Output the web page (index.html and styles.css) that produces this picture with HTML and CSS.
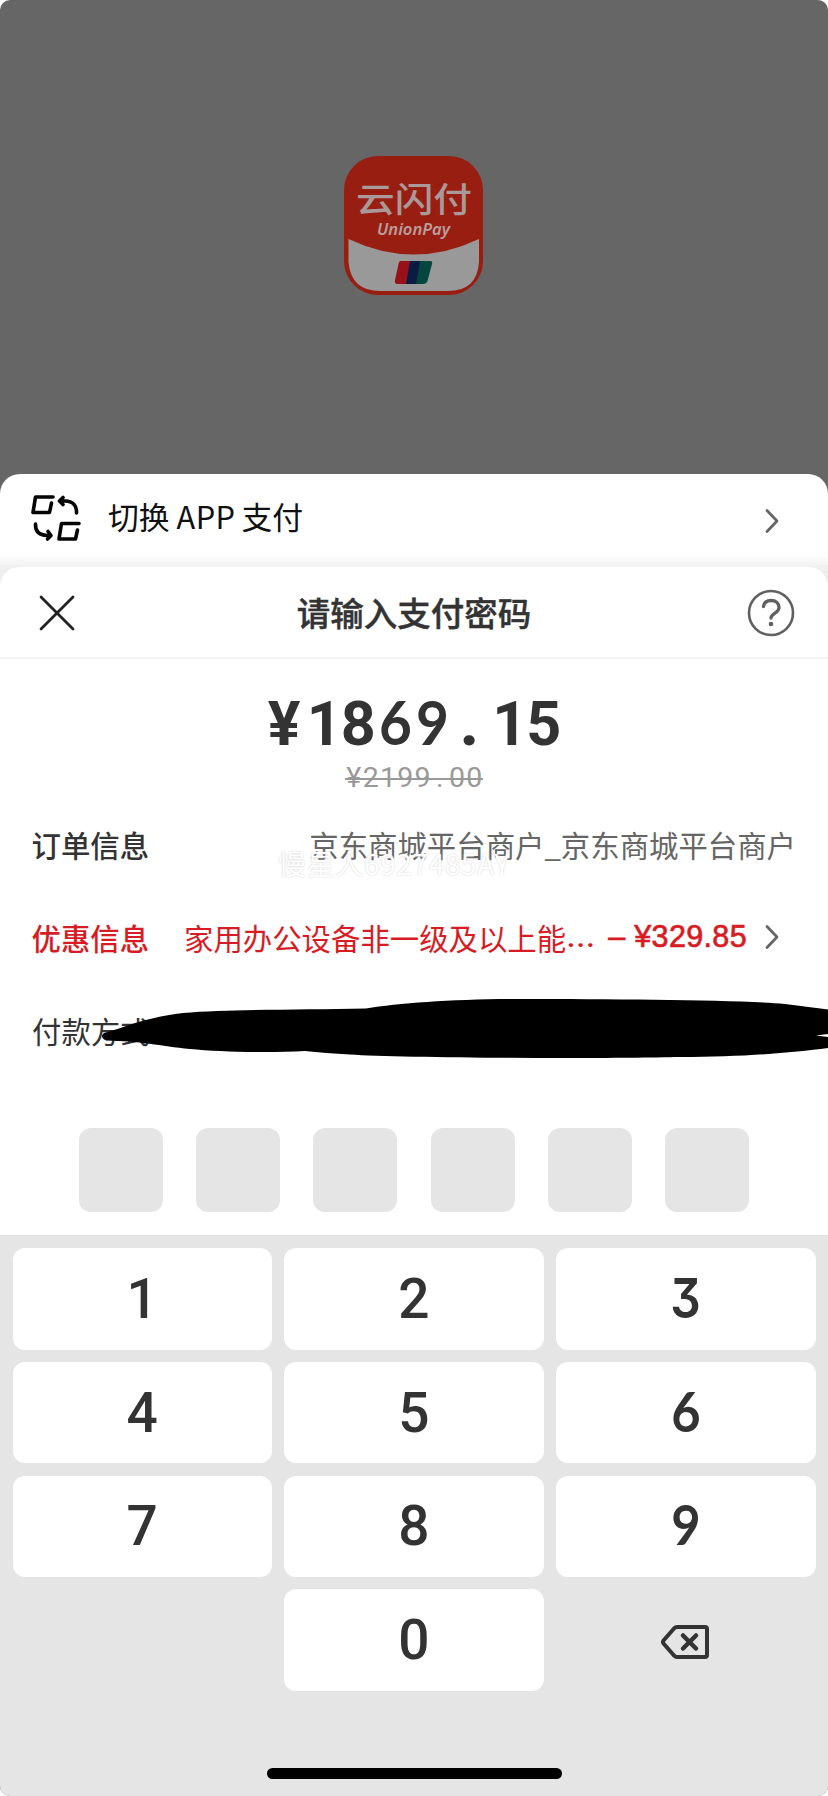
FILE: index.html
```html
<!DOCTYPE html>
<html lang="zh-CN">
<head>
<meta charset="utf-8">
<title>支付</title>
<link rel="stylesheet" href="styles.css">
</head>
<body>
<div class="screen">
  <header class="backdrop">
    <svg class="logo" viewBox="0 0 140 140">
      <rect width="139" height="139" rx="34" fill="#991e12"/>
      <path d="M4.500 83Q70 114 135 83V106Q133 135 104 135H36Q7 135 4.500 106Z" fill="#999"/>
      <path d="M57 105H69L63 128H54Q50 128 51 124L54.500 108Q55 105 57 105Z" fill="#981018"/>
      <path d="M66 105H77L73 128H62Z" fill="#0a1c44"/>
      <path d="M76 105H86Q89 105 88 108L83.500 125Q82.500 128 79 128H72Z" fill="#05463e"/>
      <text class="logo-cn" x="12" y="55.500" textLength="116" lengthAdjust="spacingAndGlyphs">云闪付</text>
      <text class="logo-en" x="33" y="79" textLength="73" lengthAdjust="spacingAndGlyphs">UnionPay</text>
    </svg>
  </header>
  <section class="switch">
    <svg class="switch-icon" viewBox="0 0 50 48" fill="none" stroke="#050505" stroke-width="3.600" stroke-linecap="round" stroke-linejoin="round">
      <path d="M22 3H4.500L2 18.500H18.500L20.500 9"/>
      <path d="M48 29.500H30.500L28 45H44.500L46.500 36"/>
      <path d="M45.500 19Q46 7.500 34 7H30M32 3.500L28.500 7L32 10.500"/>
      <path d="M4.500 30Q4 41 16 41.500H20M17 37.500L20 41.500L16.500 45"/>
    </svg>
    <span class="switch-text">切换<span class="app">APP</span>支付</span>
    <svg class="chevron" viewBox="0 0 16 26"><path d="M3 2.500L13 13L3 23.500"/></svg>
  </section>
  <main class="sheet">
    <div class="titlebar">
      <svg class="close" viewBox="0 0 36 36"><path d="M2 2L34 34M34 2L2 34"/></svg>
      <h1>请输入支付密码</h1>
      <svg class="help" viewBox="0 0 48 48" fill="none" stroke="#606060">
        <circle cx="24" cy="24" r="22" stroke-width="2.600"/>
        <path d="M16.500 17.500C17 13 20 11.500 24 11.500C29 11.500 32 14.500 32 18.500C32 24 24 24.500 24 29" stroke-width="3.300" stroke-linecap="round"/>
        <circle cx="24" cy="35" r="2.300" fill="#606060" stroke="none"/>
      </svg>
    </div>
    <div class="price"><i>¥</i><i class="one">1</i><i>8</i><i class="lato">6</i><i class="lato">9</i><i class="dot">.</i><i class="one">1</i><i>5</i></div>
    <div class="old"><i>¥</i><i>2</i><i>1</i><i>9</i><i>9</i><i>.</i><i>0</i><i>0</i></div>
    <div class="rows">
      <div class="row"><b>订单信息</b><span class="merchant">京东商城平台商户_京东商城平台商户</span>
        <span class="watermark">慢星人6927485AY</span></div>
      <div class="row red"><b>优惠信息</b><span class="promo">家用办公设备非一级及以上能<span class="ellipsis">…</span></span><span class="off">– ¥329.85</span>
        <svg class="chevron" viewBox="0 0 16 26"><path d="M3 2.500L13 13L3 23.500"/></svg></div>
      <div class="row"><span class="pay">付款方式</span>
        <svg class="scribble" viewBox="100 995 728 66"><path d="M104 1033C118 1030 145 1017 183 1013C230 1009 300 1010 366 1008.500C400 1003 455 999 520 999C620 999 740 1000 785 1004Q810 1007 828 1009.500V1034L816 1035.500L828 1037V1048C790 1053 740 1057 680 1057C600 1059 400 1058 350 1054.500Q325 1053 305 1051C270 1053 220 1052 190 1049C160 1046 140 1041 106 1040.500Q99 1037 104 1033Z"/></svg></div>
    </div>
    <div class="pin"><span></span><span></span><span></span><span></span><span></span><span></span></div>
  </main>
  <div class="keypad">
    <div class="keys">
      <button>1</button><button>2</button><button><span class="flat">3</span></button>
      <button>4</button><button>5</button><button><span class="lato">6</span></button>
      <button>7</button><button>8</button><button><span class="lato">9</span></button>
      <span></span><button>0</button>
      <div class="delete"><svg viewBox="0 0 48 34" fill="none" stroke="#333" stroke-linecap="round" stroke-linejoin="round"><path d="M16 2H44Q46 2 46 4V30Q46 32 44 32H16Q14.500 32 13 30.500L2.500 18.500Q1.500 17 2.500 15.500L13 3.500Q14.500 2 16 2Z" stroke-width="4"/><path d="M22 10.500L35 23.500M35 10.500L22 23.500" stroke-width="4.500"/></svg></div>
    </div>
    <div class="home"></div>
  </div>
</div>
</body>
</html>
```
FILE: styles.css
```css
* { box-sizing: border-box; }
body { margin: 0; background: #fff; font-family: "Noto Sans CJK SC", sans-serif; color: #333; }
i { font-style: normal; }
svg { display: block; flex: none; }
.screen { width: 828px; height: 1796px; background: #666; border-radius: 10px; overflow: hidden; display: flex; flex-direction: column; }
.backdrop { height: 474px; flex: none; padding-top: 156px; }
.logo { width: 140px; height: 140px; margin: 0 auto; }
.logo-cn { font-size: 34px; font-weight: 500; fill: #a99a99; }
.logo-en { font: italic 600 16.500px "Noto Sans", sans-serif; fill: #b99f9c; }
.switch { height: 113px; flex: none; margin-bottom: -20px; padding: 0 48px 25px 31px; display: flex; align-items: center; background: linear-gradient(#fff 80px, #eee 96px, #eee); border-radius: 20px 20px 0 0; }
.switch-icon { width: 50px; height: 48px; }
.switch-text { flex: 1; margin: -4px 0 0 27px; font-size: 30.800px; line-height: 44px; color: #111; white-space: nowrap; }
.app { margin: 0 6px 0 7px; letter-spacing: .4px; }
.chevron { width: 16px; height: 26px; fill: none; stroke: #666; stroke-width: 2.800; stroke-linecap: round; stroke-linejoin: round; }
.switch .chevron { margin-top: 6px; }
.sheet { height: 668px; flex: none; background: #fff; border-radius: 20px 20px 0 0; position: relative; }
.titlebar { height: 92px; border-bottom: 2px solid #f3f3f3; display: flex; align-items: center; justify-content: space-between; padding: 2px 33px 0 39px; }
.close { width: 36px; height: 36px; fill: none; stroke: #222; stroke-width: 2.800; stroke-linecap: round; }
h1 { margin: -2px 0 0 6px; font-size: 33.500px; line-height: 48px; font-weight: 500; -webkit-text-stroke: .4px #333; }
.help { width: 48px; height: 48px; }
.price { height: 70px; margin-top: 30px; display: flex; justify-content: center; font: 700 61px/70px Roboto, sans-serif; }
.price i { width: 37.100px; text-align: center; }
.lato { font-family: Lato, sans-serif; }
.price .lato { margin-top: -2px; transform: scaleX(.93); }
.price .one { transform: translateX(3px); }
.price .dot { transform: scale(1.15); transform-origin: 50% 57px; }
.old { width: 138px; height: 34px; margin: 2px auto 0; display: flex; font: 400 28.500px/34px Roboto, sans-serif; color: #999; background: linear-gradient(#999, #999) 0 17px / 100% 2px no-repeat; }
.old i { width: 17.250px; text-align: center; }
.rows { padding: 2px 32px 0; }
.row { height: 93px; display: flex; align-items: center; position: relative; font-size: 29.400px; line-height: 44px; white-space: nowrap; }
.row b { font-weight: 500; margin-left: -.5px; }
.merchant { margin-left: auto; color: #666; font-weight: 400; }
.watermark { position: absolute; left: 246px; top: 46px; font: 400 28px/40px "Noto Sans CJK SC", sans-serif; color: #fff; letter-spacing: .65px; text-shadow: 0 0 2px #ccc; }
.red { color: #d71c24; padding-right: 16px; }
.promo { margin-left: 35px; }
.ellipsis { display: inline-block; height: 44px; vertical-align: top; font-family: Inter, sans-serif; transform: scaleX(1.15); transform-origin: 0 50%; }
.off { margin: -1px 17px 0 auto; font: 400 30.500px/44px "Liberation Sans", sans-serif; letter-spacing: .35px; -webkit-text-stroke: .7px #d71c24; }
.scribble { position: absolute; left: 68px; top: 12px; width: 728px; height: 66px; fill: #000; }
.pin { display: flex; gap: 33.200px; padding: 52px 0 0 79px; }
.pin span { width: 84px; height: 84px; border-radius: 12px; background: #e5e5e5; }
.keypad { flex: 1; background: #e5e5e5; padding: 13px 12.500px 0; }
.keys { display: grid; grid-template-columns: repeat(3, 1fr); grid-auto-rows: 101.500px; gap: 12.300px; }
button { border: 0; border-radius: 12px; background: #fff; color: #333; padding: 0; font: 500 55px/64px Roboto, sans-serif; }
button .lato { display: inline-block; font-weight: 700; transform: translateY(-1.500px) scaleX(.92); }
.flat { display: inline-block; font-family: Inter, sans-serif; font-weight: 600; font-feature-settings: "cv09"; transform: scaleX(.87); }
.delete { display: flex; align-items: center; justify-content: center; padding: 4px 1px 0 0; }
.delete svg { width: 48px; height: 34px; }
.home { width: 295px; height: 11px; margin: 77px auto 0; border-radius: 6px; background: #000; }
```
